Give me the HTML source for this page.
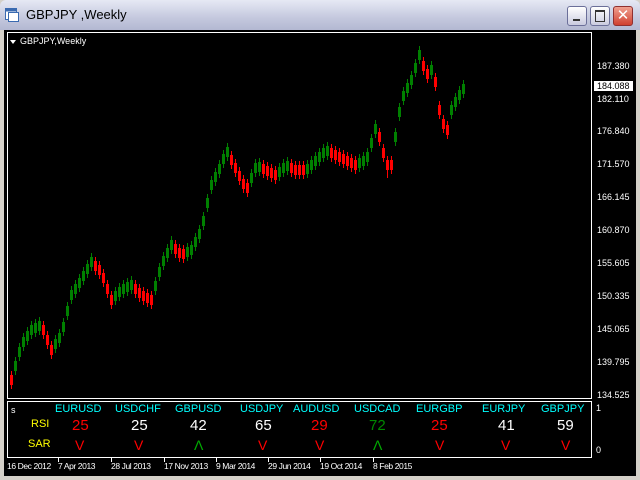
<!DOCTYPE html>
<html><head><meta charset="utf-8"><style>
*{margin:0;padding:0}
body{width:640px;height:480px;background:#d4d0c8;overflow:hidden;position:relative;font-family:"Liberation Sans",sans-serif}
#title{position:absolute;left:0;top:0;width:640px;height:30px;background:linear-gradient(#e6e9f4,#c4c8de 60%,#b3b8d2);border-radius:6px 6px 0 0}
#title span{position:absolute;left:26px;top:7px;font-size:13px;color:#000}
.btn{position:absolute;top:6px;width:18px;height:18px;border:1px solid #6b6f99;border-radius:3px;background:linear-gradient(#fff,#c9cbe0)}
#chart{position:absolute;left:4px;top:30px;width:632px;height:446px;background:#000}
.t{position:absolute;font-size:9px;color:#fff;white-space:nowrap}
.d{position:absolute;font-size:8.5px;letter-spacing:-0.4px;color:#fff;white-space:nowrap;top:461px}
.ind{position:absolute;font-size:11px;white-space:nowrap}
.c{color:#0ff;top:403px}
.n{font-size:15px;top:417px}
.v{font-size:14px;top:437px}
.tk{position:absolute;top:458px;width:1px;height:4px;background:#fff}
</style></head><body>
<div id="title">
<svg style="position:absolute;left:5px;top:8px" width="14" height="14"><rect x="0.5" y="0.5" width="11" height="11" fill="#fff" stroke="#3a6ab0"/><rect x="0.5" y="0.5" width="11" height="3" fill="#3a6ab0"/><rect x="3.5" y="4.5" width="10" height="9" fill="#fff" stroke="#3a6ab0"/></svg>
<span>GBPJPY ,Weekly</span>
<div class="btn" style="left:567px"><div style="position:absolute;left:5px;top:12px;width:7px;height:2px;background:#333"></div></div>
<div class="btn" style="left:590px"><div style="position:absolute;left:4px;top:3px;width:8px;height:9px;border:1px solid #333;border-top-width:2px"></div></div>
<div class="btn" style="left:613px;background:linear-gradient(#f0a090,#d04030);border-color:#903030;color:#fff;font-size:15px;text-align:center;line-height:18px">✕</div>
</div>
<div id="chart"></div>
<svg style="position:absolute;left:0;top:0" width="640" height="480">
<rect x="7.5" y="32.5" width="584" height="366" fill="none" stroke="#fff"/>
<rect x="7.5" y="401.5" width="584" height="56" fill="none" stroke="#fff"/>
<polygon points="10,40 16,40 13,44" fill="#fff"/>
<path fill="none" stroke="#008000" stroke-width="1" d="M15.5 357v18M19.5 343v18M23.5 333v18M27.5 327v18M31.5 321v18M35.5 319v18M39.5 317v18M55.5 335v18M59.5 329v18M63.5 318v18M67.5 302v18M71.5 286v18M75.5 280v18M79.5 274v18M83.5 267v18M87.5 260v18M91.5 253v18M115.5 287v18M119.5 283v18M123.5 280v18M127.5 278v18M131.5 276v18M155.5 277v18M159.5 263v18M163.5 252v18M167.5 244v18M171.5 236v18M187.5 243v18M191.5 241v18M195.5 233v18M199.5 225v18M203.5 212v18M207.5 194v18M211.5 176v18M215.5 168v18M219.5 160v18M223.5 150v18M227.5 143v18M251.5 169v18M255.5 159v18M259.5 158v18M279.5 163v18M283.5 159v18M287.5 157v18M307.5 160v18M311.5 156v18M315.5 152v18M319.5 148v18M323.5 144v18M327.5 142v18M359.5 154v18M363.5 152v18M367.5 148v18M371.5 134v18M375.5 120v18M395.5 128v18M399.5 103v18M403.5 87v18M407.5 79v18M411.5 71v18M415.5 59v18M419.5 46v18M431.5 61v18M451.5 101v18M455.5 93v18M459.5 86v18M463.5 80v18"/>
<path fill="none" stroke="#008000" stroke-width="3" d="M15.5 361v10M19.5 347v10M23.5 337v10M27.5 331v10M31.5 325v10M35.5 323v10M39.5 321v10M55.5 339v10M59.5 333v10M63.5 322v10M67.5 306v10M71.5 290v10M75.5 284v10M79.5 278v10M83.5 271v10M87.5 264v10M91.5 257v10M115.5 291v10M119.5 287v10M123.5 284v10M127.5 282v10M131.5 280v10M155.5 281v10M159.5 267v10M163.5 256v10M167.5 248v10M171.5 240v10M187.5 247v10M191.5 245v10M195.5 237v10M199.5 229v10M203.5 216v10M207.5 198v10M211.5 180v10M215.5 172v10M219.5 164v10M223.5 154v10M227.5 147v10M251.5 173v10M255.5 163v10M259.5 162v10M279.5 167v10M283.5 163v10M287.5 161v10M307.5 164v10M311.5 160v10M315.5 156v10M319.5 152v10M323.5 148v10M327.5 146v10M359.5 158v10M363.5 156v10M367.5 152v10M371.5 138v10M375.5 124v10M395.5 132v10M399.5 107v10M403.5 91v10M407.5 83v10M411.5 75v10M415.5 63v10M419.5 50v10M431.5 65v10M451.5 105v10M455.5 97v10M459.5 90v10M463.5 84v10"/>
<path fill="none" stroke="#f00" stroke-width="1" d="M11.5 371v18M43.5 321v18M47.5 331v18M51.5 341v18M95.5 257v18M99.5 261v18M103.5 269v18M107.5 280v18M111.5 291v18M135.5 280v18M139.5 284v18M143.5 287v18M147.5 289v18M151.5 291v18M175.5 240v18M179.5 244v18M183.5 245v18M231.5 151v18M235.5 159v18M239.5 167v18M243.5 175v18M247.5 179v18M263.5 160v18M267.5 162v18M271.5 164v18M275.5 166v18M291.5 159v18M295.5 161v18M299.5 161v18M303.5 161v18M331.5 144v18M335.5 146v18M339.5 148v18M343.5 150v18M347.5 152v18M351.5 154v18M355.5 156v18M379.5 128v18M383.5 144v18M387.5 156v22M391.5 156v18M423.5 57v18M427.5 65v18M435.5 73v18M439.5 101v18M443.5 115v18M447.5 121v18"/>
<path fill="none" stroke="#f00" stroke-width="3" d="M11.5 375v10M43.5 325v10M47.5 335v10M51.5 345v10M95.5 261v10M99.5 265v10M103.5 273v10M107.5 284v10M111.5 295v10M135.5 284v10M139.5 288v10M143.5 291v10M147.5 293v10M151.5 295v10M175.5 244v10M179.5 248v10M183.5 249v10M231.5 155v10M235.5 163v10M239.5 171v10M243.5 179v10M247.5 183v10M263.5 164v10M267.5 166v10M271.5 168v10M275.5 170v10M291.5 163v10M295.5 165v10M299.5 165v10M303.5 165v10M331.5 148v10M335.5 150v10M339.5 152v10M343.5 154v10M347.5 156v10M351.5 158v10M355.5 160v10M379.5 132v10M383.5 148v10M387.5 160v10M391.5 160v10M423.5 61v10M427.5 69v10M435.5 77v10M439.5 105v10M443.5 119v10M447.5 125v10"/>
</svg>
<div class="t" style="left:20px;top:36px">GBPJPY,Weekly</div>
<div class="t" style="left:597px;top:61px">187.380</div>
<div class="t" style="left:594px;top:81px;background:#fff;color:#000;padding:0 3px">184.088</div>
<div class="t" style="left:597px;top:94px">182.110</div>
<div class="t" style="left:597px;top:126px">176.840</div>
<div class="t" style="left:597px;top:159px">171.570</div>
<div class="t" style="left:597px;top:192px">166.145</div>
<div class="t" style="left:597px;top:225px">160.870</div>
<div class="t" style="left:597px;top:258px">155.605</div>
<div class="t" style="left:597px;top:291px">150.335</div>
<div class="t" style="left:597px;top:324px">145.065</div>
<div class="t" style="left:597px;top:357px">139.795</div>
<div class="t" style="left:597px;top:390px">134.525</div>
<div class="t" style="left:596px;top:403px">1</div>
<div class="t" style="left:596px;top:445px">0</div>
<div class="t" style="left:11px;top:405px">s</div>
<div class="ind" style="left:31px;top:418px;color:#ff0">RSI</div>
<div class="ind" style="left:28px;top:438px;color:#ff0">SAR</div>

<div class="ind c" style="left:55px">EURUSD</div>
<div class="ind c" style="left:115px">USDCHF</div>
<div class="ind c" style="left:175px">GBPUSD</div>
<div class="ind c" style="left:240px">USDJPY</div>
<div class="ind c" style="left:293px">AUDUSD</div>
<div class="ind c" style="left:354px">USDCAD</div>
<div class="ind c" style="left:416px">EURGBP</div>
<div class="ind c" style="left:482px">EURJPY</div>
<div class="ind c" style="left:541px">GBPJPY</div>

<div class="ind n" style="left:72px;color:#f00">25</div>
<div class="ind n" style="left:131px;color:#fff">25</div>
<div class="ind n" style="left:190px;color:#fff">42</div>
<div class="ind n" style="left:255px;color:#fff">65</div>
<div class="ind n" style="left:311px;color:#f00">29</div>
<div class="ind n" style="left:369px;color:#080">72</div>
<div class="ind n" style="left:431px;color:#f00">25</div>
<div class="ind n" style="left:498px;color:#fff">41</div>
<div class="ind n" style="left:557px;color:#fff">59</div>

<div class="ind v" style="left:75px;color:#f00">V</div>
<div class="ind v" style="left:134px;color:#f00">V</div>
<div class="ind v" style="left:194px;color:#0a0">Λ</div>
<div class="ind v" style="left:258px;color:#f00">V</div>
<div class="ind v" style="left:315px;color:#f00">V</div>
<div class="ind v" style="left:373px;color:#0a0">Λ</div>
<div class="ind v" style="left:435px;color:#f00">V</div>
<div class="ind v" style="left:501px;color:#f00">V</div>
<div class="ind v" style="left:561px;color:#f00">V</div>

<div class="d" style="left:7px">16 Dec 2012</div>
<div class="d" style="left:58px">7 Apr 2013</div><div class="tk" style="left:58px"></div>
<div class="d" style="left:111px">28 Jul 2013</div><div class="tk" style="left:111px"></div>
<div class="d" style="left:164px">17 Nov 2013</div><div class="tk" style="left:164px"></div>
<div class="d" style="left:216px">9 Mar 2014</div><div class="tk" style="left:216px"></div>
<div class="d" style="left:268px">29 Jun 2014</div><div class="tk" style="left:268px"></div>
<div class="d" style="left:320px">19 Oct 2014</div><div class="tk" style="left:320px"></div>
<div class="d" style="left:373px">8 Feb 2015</div><div class="tk" style="left:373px"></div>
</body></html>
